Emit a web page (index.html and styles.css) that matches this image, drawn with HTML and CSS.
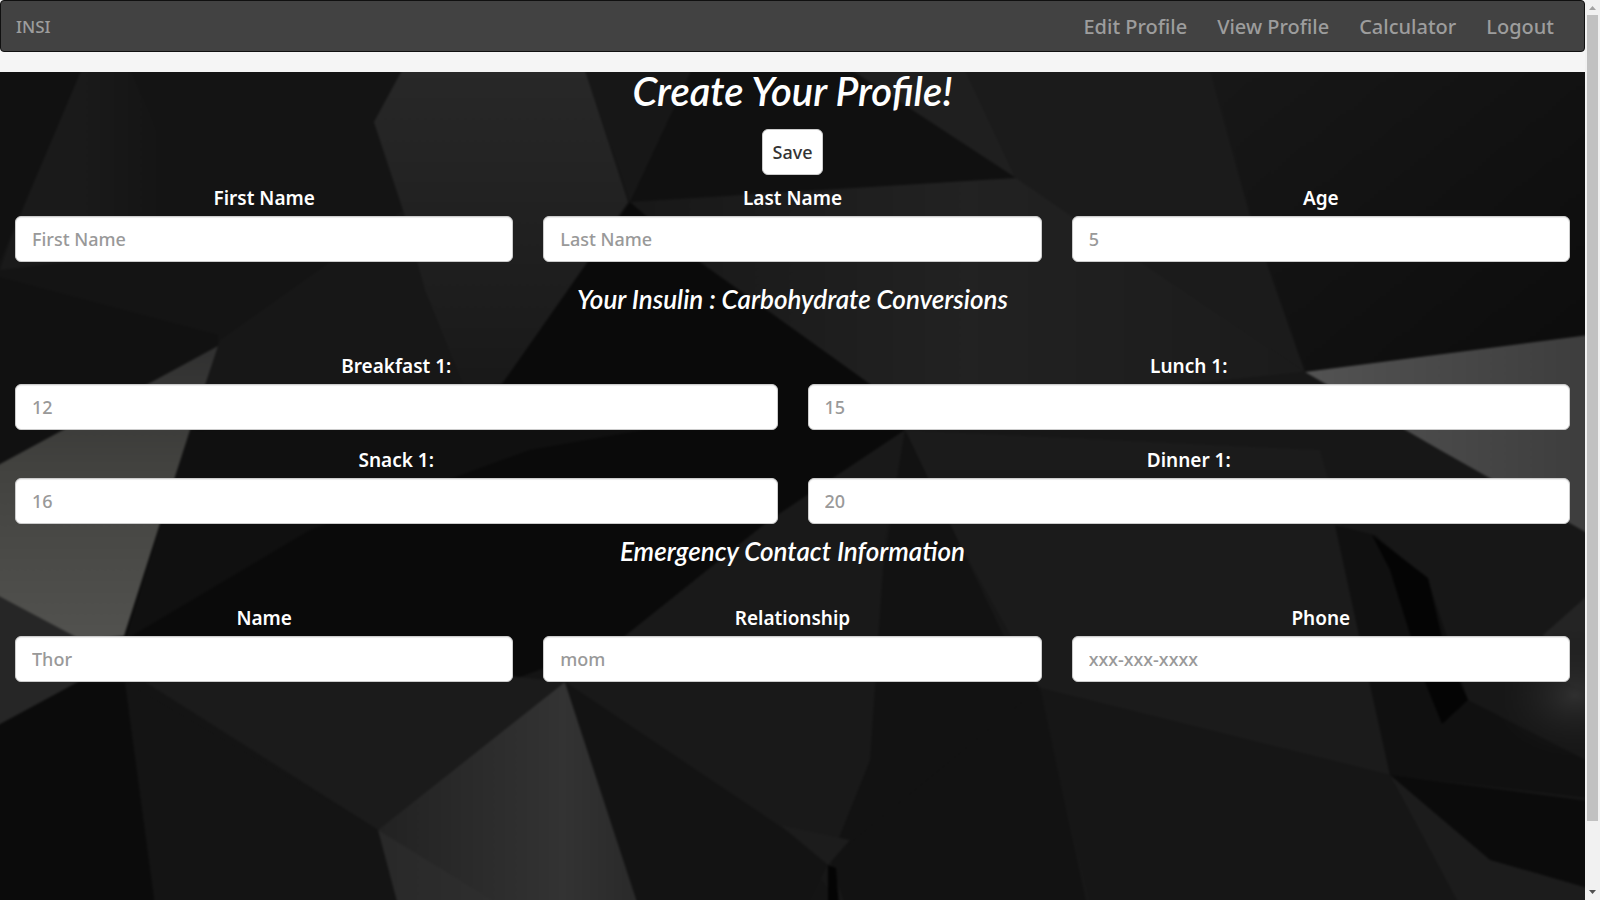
FILE: index.html
```html
<!DOCTYPE html>
<html lang="en">
<head>
<meta charset="utf-8">
<title>INSI - Create Your Profile</title>
<link rel="stylesheet" href="styles.css">
</head>
<body>
<div class="page">
  <nav class="navbar">
    <a class="brand" href="#">INSI</a>
    <div class="nav-links">
      <a href="#">Edit Profile</a>
      <a href="#">View Profile</a>
      <a href="#">Calculator</a>
      <a href="#">Logout</a>
    </div>
  </nav>
  <main class="profile">
    <svg class="backdrop" viewBox="0 72 1585 828" preserveAspectRatio="none" aria-hidden="true">
      <defs>
        <filter id="soft" x="0" y="0" width="1" height="1" color-interpolation-filters="sRGB"><feGaussianBlur stdDeviation="1.3"/></filter>
        <linearGradient id="left" x1="0" y1="0" x2="0" y2="1"><stop offset="0" stop-color="#303030"/><stop offset=".4" stop-color="#42423f"/><stop offset="1" stop-color="#52524f"/></linearGradient>
        <linearGradient id="right" x1="0" y1="0" x2="1" y2="0"><stop offset="0" stop-color="#535353"/><stop offset="1" stop-color="#3c3c3c"/></linearGradient>
        <linearGradient id="low" x1="0" y1="0" x2="1" y2="0"><stop offset="0" stop-color="#222"/><stop offset=".7" stop-color="#333"/><stop offset="1" stop-color="#292929"/></linearGradient>
        <linearGradient id="top" x1="0" y1="0" x2="0" y2="1"><stop offset="0" stop-color="#292929"/><stop offset="1" stop-color="#191919"/></linearGradient>
        <linearGradient id="mid" x1="0" y1="0" x2="1" y2="0"><stop offset="0" stop-color="#181818"/><stop offset=".5" stop-color="#222"/><stop offset="1" stop-color="#1b1b1b"/></linearGradient>
        <linearGradient id="corner" x1="0" y1="0" x2="1" y2="1"><stop offset="0" stop-color="#181818"/><stop offset="1" stop-color="#0c0c0c"/></linearGradient>
        <linearGradient id="band" x1="0" y1="0" x2="1" y2="0"><stop offset=".5" stop-color="#1a1a1a"/><stop offset="1" stop-color="#141414"/></linearGradient>
        <radialGradient id="glow"><stop offset="0" stop-color="#303030"/><stop offset="1" stop-color="#171717" stop-opacity="0"/></radialGradient>
      </defs>
      <rect y="72" width="1585" height="828" fill="#141414"/>
      <g filter="url(#soft)">
        <path fill="#141414" d="M-20 52H1605V920H-20Z"/>
        <path fill="#111" d="M-20 52H89L0 260H-20Z"/>
        <path fill="url(#band)" d="M89 52H122L165 150V250L0 270L12 235Z"/>
        <path fill="#111" d="M-20 272L218 335V346L0 465H-20Z"/>
        <path fill="#171717" d="M220 340L403 210L425 290L463 384L440 430L190 430Z"/>
        <path fill="url(#top)" d="M412 52H579L628 202L585 265L502 384H463L425 290L403 210L374 122Z"/>
        <path fill="#171717" d="M579 52H708L630 202Z"/>
        <path fill="#101010" d="M700 52H830L1016 178L630 202Z"/>
        <path fill="#1f1f1f" d="M824 52H957L1016 178Z"/>
        <path fill="#1b1b1b" d="M957 52H1205L1250 215L1305 372L1070 215L1016 178Z"/>
        <path fill="url(#corner)" d="M1205 52H1605V336L1305 372L1250 215Z"/>
        <path fill="#0a0a0a" d="M630 202L870 384L905 430L770 520L620 640L520 677L120 645L190 430L502 384Z"/>
        <path fill="#101010" d="M190 430L700 420L530 450L310 530L125 640Z"/>
        <path fill="url(#mid)" d="M630 202L1016 178L1070 215L1305 372L1150 388L905 430L870 384L700 262Z"/>
        <path fill="#171717" d="M905 430L1150 388L1305 372L1440 450L1605 540V920H850L800 850L565 682L620 640L770 520Z"/>
        <path fill="#1b1b1b" d="M905 430L1320 450L1345 540L1390 775L1040 688L960 545Z"/>
        <path fill="#121212" d="M905 430L960 545L1020 670L1040 688L830 860L880 590Z"/>
        <path fill="#191919" d="M905 430L885 540L870 760L830 860L565 682L620 640L770 520Z"/>
        <path fill="#121212" d="M1040 688L1090 920H850L830 860Z"/>
        <path fill="#161616" d="M1040 688L1390 775L1465 920H1095Z"/>
        <path fill="url(#left)" d="M218 346L148 384L-20 475V586L76 640L124 636L190 430Z"/>
        <path fill="#262626" d="M-20 586L76 637L125 640L78 682L-20 737Z"/>
        <path fill="#0b0b0b" d="M-20 735L78 682H125L157 920H-20Z"/>
        <path fill="#141414" d="M125 682L378 830L402 920H157Z"/>
        <path fill="#1b1b1b" d="M145 682L500 675L565 682L378 830Z"/>
        <path fill="url(#low)" d="M565 682L378 830L402 920H643Z"/>
        <path fill="#303030" opacity=".5" d="M378 830L525 920H402Z"/>
        <path fill="#131313" d="M565 682L830 860L800 920H643Z"/>
        <path fill="#1c1c1c" d="M780 825L850 840L828 865Z"/>
        <path fill="#040404" d="M828 865L836 868L840 920H828Z"/>
        <path fill="url(#right)" d="M1305 372L1605 333V543L1440 450Z"/>
        <path fill="#101010" d="M1335 525L1375 535L1428 580L1468 700L1605 770V800L1390 775L1360 640Z"/>
        <path fill="#040404" d="M1372 535L1428 578L1445 650L1468 700L1442 724L1425 682L1390 570Z"/>
        <path fill="#242424" d="M1605 580L1543 635L1565 682L1605 700Z"/>
        <ellipse cx="1575" cy="695" rx="85" ry="65" fill="url(#glow)"/>
        <path fill="#0b0b0b" d="M1390 775L1605 803V893L1490 860Z"/>
        <path fill="#1c1c1c" d="M1390 775L1490 860L1605 893V920H1468Z"/>
      </g>
    </svg>
    <form class="form">
      <h1>Create Your Profile!</h1>
      <button class="save" type="button">Save</button>
      <div class="row thirds">
        <div class="field"><label for="first">First Name</label><input id="first" type="text" placeholder="First Name"></div>
        <div class="field"><label for="last">Last Name</label><input id="last" type="text" placeholder="Last Name"></div>
        <div class="field"><label for="age">Age</label><input id="age" type="text" placeholder="5"></div>
      </div>
      <h2 class="spaced">Your Insulin : Carbohydrate Conversions</h2>
      <div class="row halves">
        <div class="field"><label for="breakfast">Breakfast 1:</label><input id="breakfast" type="text" placeholder="12"></div>
        <div class="field"><label for="lunch">Lunch 1:</label><input id="lunch" type="text" placeholder="15"></div>
        <div class="field"><label for="snack">Snack 1:</label><input id="snack" type="text" placeholder="16"></div>
        <div class="field"><label for="dinner">Dinner 1:</label><input id="dinner" type="text" placeholder="20"></div>
      </div>
      <h2>Emergency Contact Information</h2>
      <div class="row thirds">
        <div class="field"><label for="name">Name</label><input id="name" type="text" placeholder="Thor"></div>
        <div class="field"><label for="relation">Relationship</label><input id="relation" type="text" placeholder="mom"></div>
        <div class="field"><label for="phone">Phone</label><input id="phone" type="text" placeholder="xxx-xxx-xxxx"></div>
      </div>
    </form>
  </main>
</div>
<div class="scrollbar" aria-hidden="true">
  <svg class="arrow" viewBox="0 0 15 15"><path fill="#a3a3a3" d="M4 10L7.5 6L11 10Z"/></svg>
  <div class="track"><div class="thumb"></div></div>
  <svg class="arrow" viewBox="0 0 15 15"><path fill="#505050" d="M4 5L7.5 9L11 5Z"/></svg>
</div>
</body>
</html>
```
FILE: styles.css
```css
* { box-sizing: border-box; }
body {
  margin: 0;
  height: 100vh;
  display: flex;
  overflow: hidden;
  background: #f5f5f5;
  font-family: "Noto Sans", "Open Sans", sans-serif;
  font-weight: 500;
}
.page {
  flex: 1;
  min-width: 0;
  display: flex;
  flex-direction: column;
}
.navbar {
  display: flex;
  align-items: center;
  justify-content: space-between;
  min-height: 52px;
  margin-bottom: 20px;
  padding: 0 30px 0 15px;
  background: #424242;
  border: 1px solid #101010;
  border-radius: 4px;
}
.navbar a { color: #9d9d9d; text-decoration: none; }
.brand { font-size: 17px; }
.nav-links { display: flex; gap: 30px; font-size: 20px; }
.profile {
  position: relative;
  flex: 1;
  background: #141414;
}
.backdrop {
  position: absolute;
  inset: 0;
  width: 100%;
  height: 100%;
}
.form {
  position: relative;
  display: flex;
  flex-direction: column;
  padding: 0 15px;
  color: #fff;
  text-align: center;
}
h1, h2 {
  margin: 0;
  font-family: Lato, "Noto Sans", sans-serif;
  font-style: italic;
  font-weight: 600;
}
h1 { font-size: 40px; line-height: 38px; margin-bottom: 19px; }
h2 { font-size: 26px; line-height: 26px; margin: 14px 0 41px; }
.spaced { margin-top: 24px; }
.save {
  align-self: center;
  height: 46px;
  margin-bottom: 10px;
  padding: 0 9px;
  background: #fff;
  border: 1px solid #ccc;
  border-radius: 6px;
  color: #333;
  font: inherit;
  font-size: 18px;
}
.row { display: grid; gap: 17px 30px; }
.thirds { grid-template-columns: repeat(3, 1fr); }
.halves { grid-template-columns: repeat(2, 1fr); }
.field { display: flex; flex-direction: column; gap: 5px; min-width: 0; }
label { font-size: 19px; line-height: 26px; font-weight: 600; }
input {
  width: 100%;
  height: 46px;
  padding: 10px 16px;
  background: #fff;
  border: 1px solid #ccc;
  border-radius: 6px;
  box-shadow: inset 0 1px 1px rgba(0, 0, 0, 0.075);
  color: #555;
  font: inherit;
  font-size: 18px;
}
input::placeholder { color: #999; opacity: 1; }
.scrollbar {
  width: 15px;
  display: flex;
  flex-direction: column;
  background: #f1f1f1;
}
.arrow { width: 15px; height: 15px; }
.track { flex: 1; padding: 0 2px; }
.thumb { height: 92.6%; background: #c1c1c1; }
```
